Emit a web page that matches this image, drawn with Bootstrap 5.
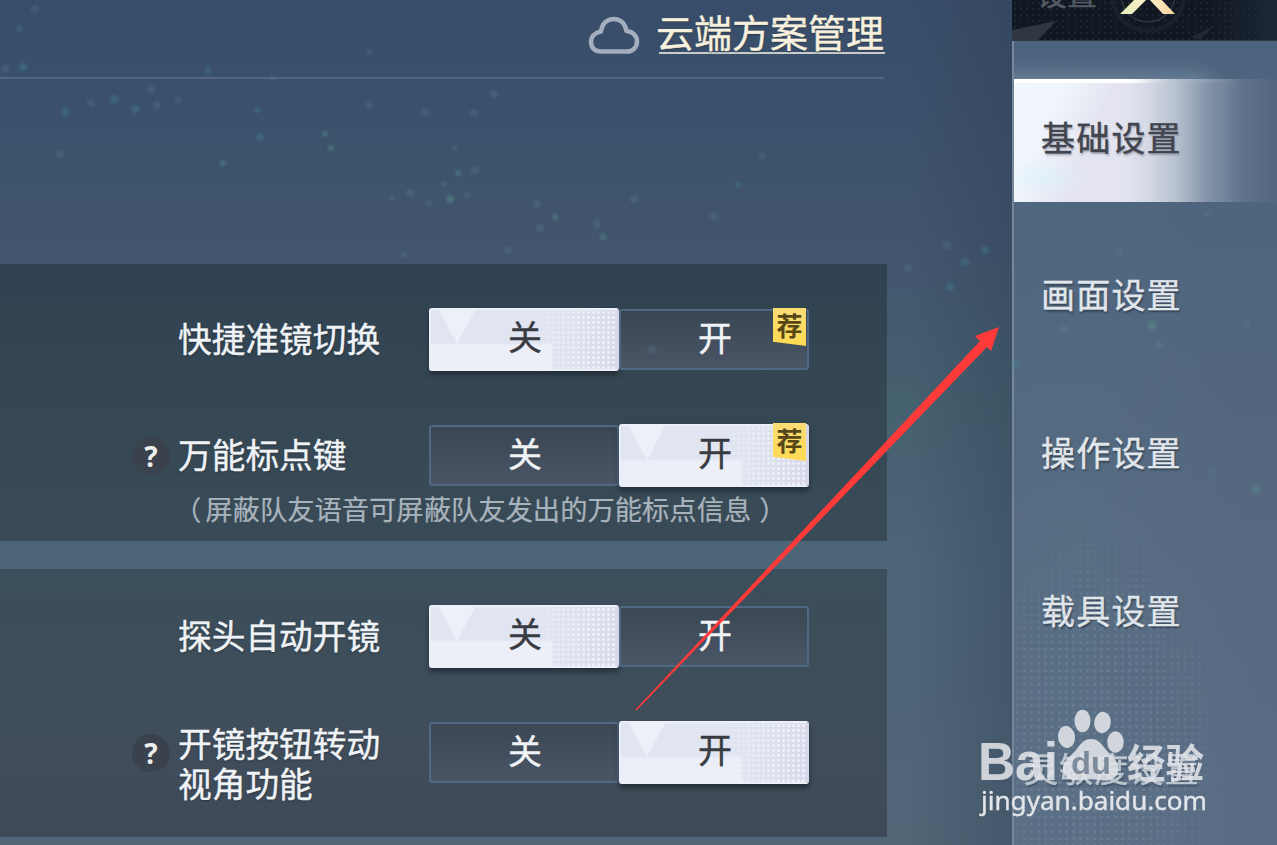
<!doctype html>
<html lang="zh-CN">
  <head>
    <meta charset="UTF-8" />
    <meta name="viewport" content="width=device-width, initial-scale=1.0" />
    <title>基础设置</title>
    <link href="https://cdn.jsdelivr.net/npm/bootstrap@5.3.0/dist/css/bootstrap.min.css" rel="stylesheet" />
    <style>
      body {
        font-family: "Liberation Sans", "Noto Sans CJK SC", sans-serif;
        background: #3d526b;
      }
      .screen {
        width: 1277px;
        height: 845px;
        -webkit-text-stroke: 0.4px currentColor;
      }
      .settings {
        width: 1012px;
        background:
          linear-gradient(90deg, transparent 910px, rgba(44, 60, 80, 0.34) 1012px),
          linear-gradient(#384d69 0, #3b506b 100px, #42566e 255px, #45606f 400px, #4c6577 555px, #526678 845px);
      }
      .settings-top {
        width: 884px;
        height: 79px;
        border-bottom: 2px solid #53657f;
      }
      .cloud-link {
        font-size: 38px;
        line-height: 52px;
        height: 46px;
        color: #f7f0dc;
        text-shadow: 0 1px 2px #27384d;
      }
      .cloud-link::after {
        content: "";
        display: block;
        height: 2px;
        margin: -8px -1px 0 3px;
        background: #c9cccb;
      }
      .panel {
        width: 887px;
      }
      .panel-a {
        height: 277px;
        margin-top: 185px;
        padding-top: 44px;
        background: linear-gradient(#304151, #354753 45%, #3a4b58);
      }
      .panel-b {
        height: 268px;
        margin-top: 28px;
        padding-top: 36px;
        background: linear-gradient(#3b4e5b, #404d5a 60%, #3f4a58);
      }
      .option {
        height: 63px;
        margin-bottom: 53px;
        padding-left: 132px;
      }
      .option-name {
        width: 251px;
        font-size: 33.7px;
        line-height: 40px;
        color: #eff3f6;
        text-shadow: 0 1px 2px rgba(20, 30, 40, 0.6);
      }
      .help {
        width: 38px;
        height: 38px;
        margin-right: 8px;
        background: #3a424d;
        color: #eceee9;
        font: bold 28px/39px "Noto Sans", sans-serif;
        -webkit-text-stroke: 0;
      }
      .note {
        margin: -46px 0 0 174px;
        font-size: 27.3px;
        line-height: 34px;
        color: #a9b3bc;
        -webkit-text-stroke: 0.2px currentColor;
      }
      .note span:first-child {
        margin-right: 4px;
      }
      .note span:last-child {
        margin-left: 8px;
      }
      .switch {
        width: 380px;
        height: 63px;
      }
      .choice {
        font-size: 34px;
        line-height: 57px;
        height: 61px;
        padding-left: 2px;
        color: #f0f3f5;
        border: 2px solid #506983;
        border-radius: 3px;
        background: linear-gradient(rgba(58, 70, 82, 0.8), #4a5566);
      }
      .choice.on {
        height: 63px;
        color: #383b42;
        border-color: #edf0f8;
        border-right-color: #d5d7ec;
        background:
          conic-gradient(from -28deg at 26px 34px, rgba(245, 247, 252, 0.6) 56deg, transparent 0) 0 0 / 60px 34px no-repeat,
          linear-gradient(transparent 55%, rgba(245, 245, 252, 0.6) 60%) 0 0 / 65% 100% no-repeat,
          linear-gradient(90deg, #e0e5f1 52%, transparent 85%),
          radial-gradient(circle, rgba(243, 249, 252, 0.75) 1px, transparent 2px) 0 0 / 5px 5px,
          linear-gradient(100deg, #dfe5f1 0, #e3e4f1 45%, #dce1ed 75%, #dad8eb);
        box-shadow: 0 4px 5px rgba(25, 32, 42, 0.65);
      }
      .pick {
        top: -3px;
        right: 1px;
        width: 33px;
        height: 38px;
        font: bold 26px/33px "Noto Sans CJK SC", sans-serif;
        -webkit-text-stroke: 0;
        color: #564719;
        background: linear-gradient(#fbdc76, #ffda52);
        clip-path: polygon(0 0, 100% 0, 100% 100%, 0 89%);
      }
      .side {
        width: 265px;
        border-left: 2px solid #75889a;
        background:
          radial-gradient(ellipse at 20% 90%, rgba(93, 119, 137, 0.4), transparent 65%),
          linear-gradient(#4b647e, #50657e 35%, #556980 65%, #5a6c84);
      }
      .side-head {
        height: 41px;
        margin-left: -2px;
        background:
          linear-gradient(90deg, transparent 75%, #1b2836),
          radial-gradient(circle, #1c2631 1px, transparent 1.5px) 0 0 / 6px 6px,
          #111822;
        border-bottom: 1px solid #2d3843;
      }
      .side-head span {
        left: 25px;
        top: -23px;
        font-size: 30px;
        line-height: 36px;
        color: #535b65;
      }
      .side-item {
        height: 158px;
        padding-left: 27px;
        font-size: 34px;
        line-height: 158px;
        letter-spacing: 1.2px;
        color: #e1e6eb;
        text-shadow: 1px 2px 2px rgba(40, 52, 68, 0.75);
      }
      .side-item.now {
        height: 123px;
        margin: 38px 0 15px;
        line-height: 113px;
        color: #41454f;
        text-shadow: 1px 2px 2px rgba(100, 105, 120, 0.5);
        border-top: 4px solid transparent;
        border-image: linear-gradient(90deg, #fff 45%, #c2cbd7 58%, #5d7089 88%, #51667f) 4 0 0 0;
        background:
          radial-gradient(ellipse at 28px 95px, rgba(222, 242, 251, 0.8), transparent 45px),
          linear-gradient(115deg, rgba(242, 248, 253, 0.9) 15%, transparent 32%),
          linear-gradient(90deg, #e6e6f2 0, #e3e4f0 42%, #d4d9e5 51%, #b6c0ce 62%, #8595aa 73%, #60738c 87%, #52667f);
        box-shadow: -60px -10px 20px -7px rgba(174, 192, 212, 0.4);
        clip-path: inset(-30px 0 0 0);
      }
      .side-item.last {
        margin-left: -17px;
        opacity: 0.75;
      }
      .dots {
        left: 1014px;
        top: 485px;
        width: 235px;
        height: 360px;
        background: radial-gradient(circle, rgba(140, 160, 176, 0.25) 1.2px, transparent 2px) 0 0 / 7px 7px;
        -webkit-mask-image: radial-gradient(ellipse at 35% 70%, #000 30%, transparent 68%);
        mask-image: radial-gradient(ellipse at 35% 70%, #000 30%, transparent 68%);
      }
      .overlay {
        pointer-events: none;
        -webkit-text-stroke: 0;
      }
    </style>
  </head>
  <body class="overflow-hidden">
    <div class="screen d-flex position-relative overflow-hidden">
      <main class="settings flex-shrink-0">
        <div class="settings-top d-flex justify-content-end align-items-start pt-2">
          <svg class="me-3 mt-2" width="52" height="40" viewBox="0 0 52 40" fill="none" stroke="#a3afbd" stroke-width="4.5" stroke-linejoin="round">
            <path d="M13 35.500H39C45 35.500 49 31 49 25.500C49 20 45 15.500 38.500 15C37 7 32 3 26 3C19 3 14 7.500 13 15.500C7 16.500 3 20.500 3 26C3 31.500 7 35.500 13 35.500Z" />
          </svg>
          <a class="cloud-link text-decoration-none text-nowrap" href="#">云端方案管理</a>
        </div>

        <section class="panel panel-a">
          <div class="option d-flex align-items-center">
            <span class="help rounded-circle text-center invisible">?</span>
            <span class="option-name">快捷准镜切换</span>
            <div class="switch d-flex align-items-center">
              <div class="choice on w-50 text-center">关</div>
              <div class="choice w-50 text-center position-relative">开<span class="pick position-absolute">荐</span></div>
            </div>
          </div>
          <div class="option d-flex align-items-center">
            <span class="help rounded-circle text-center">?</span>
            <span class="option-name">万能标点键</span>
            <div class="switch d-flex align-items-center">
              <div class="choice w-50 text-center">关</div>
              <div class="choice on w-50 text-center position-relative">开<span class="pick position-absolute">荐</span></div>
            </div>
          </div>
          <div class="note d-flex text-nowrap"><span>（</span><span>屏蔽队友语音可屏蔽队友发出的万能标点信息</span><span>）</span></div>
        </section>

        <section class="panel panel-b">
          <div class="option d-flex align-items-center">
            <span class="help rounded-circle text-center invisible">?</span>
            <span class="option-name">探头自动开镜</span>
            <div class="switch d-flex align-items-center">
              <div class="choice on w-50 text-center">关</div>
              <div class="choice w-50 text-center">开</div>
            </div>
          </div>
          <div class="option d-flex align-items-center">
            <span class="help rounded-circle text-center">?</span>
            <span class="option-name pt-4">开镜按钮转动<br />视角功能</span>
            <div class="switch d-flex align-items-center">
              <div class="choice w-50 text-center">关</div>
              <div class="choice on w-50 text-center">开</div>
            </div>
          </div>
        </section>
      </main>

      <nav class="side flex-shrink-0">
        <div class="side-head position-relative overflow-hidden">
          <span class="position-absolute">设置</span>
          <svg class="d-block" width="265" height="41" viewBox="0 0 265 41">
            <defs>
              <linearGradient id="gold">
                <stop offset="0" stop-color="#e2e9b5" />
                <stop offset="0.5" stop-color="#fff3ce" />
                <stop offset="1" stop-color="#f5cf9c" />
              </linearGradient>
            </defs>
            <path d="M0 30L44 21L25 41H0Z" fill="#303741" />
            <path d="M179 37L202 26L188 39Z" fill="#222a35" />
            <circle cx="136" cy="-5" r="27" fill="none" stroke="#394652" />
            <circle cx="136" cy="-5" r="36" fill="none" stroke="#19232e" stroke-width="4" />
            <path d="M108 14L126 -4H146L163 14H151L136 -2L120 14Z" fill="url(#gold)" />
          </svg>
        </div>
        <div class="side-item now">基础设置</div>
        <div class="side-item">画面设置</div>
        <div class="side-item">操作设置</div>
        <div class="side-item">载具设置</div>
        <div class="side-item last text-nowrap">灵敏度设置</div>
      </nav>

      <div class="dots overlay position-absolute"></div>

      <svg class="overlay position-absolute top-0 start-0" width="1277" height="845" viewBox="0 0 1277 845">
        <defs>
          <filter id="glow"><feGaussianBlur stdDeviation="1.5" /></filter>
        </defs>
        <g id="sparks" filter="url(#glow)"></g>

        <path d="M635 710L980 341L975 336L999 327L991 351L987 347L637 710Z" fill="#ff3a38" />

        <g fill="#e1e4e8" fill-opacity="0.88">
          <text x="978" y="780" font-family="Liberation Sans" font-weight="bold" font-size="53" textLength="80" lengthAdjust="spacingAndGlyphs">Bai</text>
          <ellipse cx="1066.500" cy="737" rx="8.500" ry="11" transform="rotate(-8 1066.500 737)" />
          <ellipse cx="1082.500" cy="721" rx="8" ry="11.300" />
          <ellipse cx="1102.500" cy="722.500" rx="8.300" ry="10.700" transform="rotate(8 1102.500 722.500)" />
          <ellipse cx="1115.500" cy="742" rx="8.300" ry="10.700" />
          <path d="M1091 739C1100 739 1103 747 1109 753C1115 758 1119 763 1118 771C1117 779 1109 782 1100 780C1094 779 1087 779 1081 780C1071 782 1063 777 1063 769C1063 761 1070 757 1076 750C1080 745 1083 739 1091 739Z" />
          <text x="1127" y="778" font-family="Noto Sans CJK SC" font-weight="bold" font-size="40" textLength="77" lengthAdjust="spacingAndGlyphs">经验</text>
          <text x="981" y="810" font-family="Noto Sans" font-size="25.500" fill-opacity="1" stroke="#e1e4e8" stroke-width="0.4" textLength="226" lengthAdjust="spacingAndGlyphs">jingyan.baidu.com</text>
        </g>
        <text x="1071" y="774" font-family="Liberation Sans" font-weight="bold" font-size="32" fill="#66788b" fill-opacity="0.8" textLength="40" lengthAdjust="spacingAndGlyphs">du</text>
      </svg>
    </div>

    <script>
      // x, y, radius, tone
      const sparks = [
        [35, 9, 4, 0], [19, 29, 3, 1], [23, 67, 4, 1], [6, 69, 4, 0], [91, 103, 4, 0], [114, 99, 4, 1],
        [135, 109, 4, 1], [157, 105, 4, 0], [151, 89, 4, 0], [65, 112, 4, 1], [178, 100, 3, 0], [208, 71, 3, 1],
        [257, 110, 3, 1], [260, 137, 4, 1], [325, 134, 3, 2], [331, 148, 3, 2], [223, 163, 3, 2], [60, 154, 4, 0],
        [369, 105, 4, 0], [425, 112, 4, 0], [474, 113, 4, 0], [494, 94, 4, 0], [369, 52, 3, 0], [273, 78, 3, 0],
        [455, 148, 3, 0], [458, 173, 3, 2], [475, 170, 4, 0], [444, 184, 3, 0], [410, 193, 4, 0], [429, 203, 3, 0],
        [450, 199, 4, 2], [467, 195, 3, 0], [392, 198, 3, 0], [537, 204, 4, 0], [555, 217, 3, 2], [540, 228, 4, 0],
        [597, 224, 4, 0], [603, 237, 3, 2], [404, 255, 3, 0], [508, 250, 4, 0], [634, 199, 4, 0], [762, 156, 3, 0],
        [738, 185, 3, 1], [714, 216, 4, 0], [652, 350, 4, 0], [947, 245, 4, 0], [965, 262, 4, 1],
        [908, 268, 4, 0], [985, 250, 4, 1], [950, 287, 4, 1], [1064, 329, 4, 0], [1152, 326, 4, 2], [1159, 345, 4, 0],
        [1016, 365, 4, 1], [1119, 252, 3, 0], [1256, 489, 4, 2], [1213, 471, 3, 0], [1247, 324, 3, 0], [1207, 214, 3, 0],
      ];
      const tones = ["#65839b", "#438095", "#5c978d"];
      const group = document.getElementById("sparks");

      sparks.forEach(([x, y, r, tone]) => {
        const dot = document.createElementNS("http://www.w3.org/2000/svg", "circle");
        dot.setAttribute("cx", x);
        dot.setAttribute("cy", y);
        dot.setAttribute("r", r);
        dot.setAttribute("fill", tones[tone]);
        dot.setAttribute("opacity", tone === 0 ? "0.28" : "0.45");
        group.appendChild(dot);
      });
    </script>
    <script src="https://cdn.jsdelivr.net/npm/bootstrap@5.3.0/dist/js/bootstrap.bundle.min.js"></script>
  </body>
</html>
